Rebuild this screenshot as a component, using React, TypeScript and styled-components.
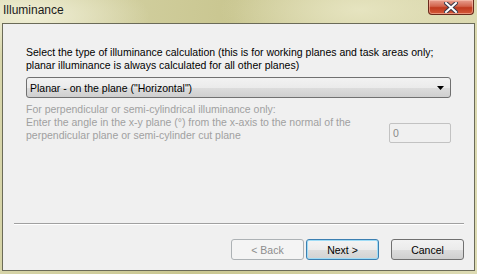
import React from 'react';
import styled, { createGlobalStyle, css } from 'styled-components';

const GlobalStyle = createGlobalStyle`
    html, body {
        margin: 0;
        padding: 0;
        background: #d6d4a8;
    }
    * {
        box-sizing: border-box;
    }
`

const Window = styled.div`
    width: 477px;
    height: 274px;
    display: flex;
    flex-direction: column;
    background:
        radial-gradient(ellipse 120px 40px at 30px 16px, #f0efd6 0%, rgba(240, 239, 214, 0) 100%),
        radial-gradient(ellipse 140px 50px at 360px 10px, #e6e4c0 0%, rgba(230, 228, 192, 0) 100%),
        linear-gradient(100deg, #d9d7ad 0%, #c9c690 45%, #d2cf9f 70%, #dddbb4 100%);
    font-family: "Liberation Sans", Arial, sans-serif;
    font-size: 10.5px;
    color: #000;
`

const TitleBar = styled.div`
    height: 23px;
    flex: 0 0 23px;
    display: flex;
    justify-content: space-between;
    align-items: flex-start;
    padding-left: 3px;
`

const Title = styled.div`
    font-size: 12px;
    line-height: 20px;
    color: #1a1a1a;
`

const CloseButton = styled.div`
    width: 46px;
    height: 15px;
    margin-right: 3px;
    border: 1px solid #6a2a1c;
    border-top: none;
    border-radius: 0 0 4px 4px;
    background: linear-gradient(to bottom, #e8a090 0%, #d2644c 45%, #c03a1e 55%, #d4593a 100%);
    box-shadow: inset 0 0 0 1px rgba(255, 210, 190, 0.5);
    display: flex;
    justify-content: center;
    align-items: center;
`

const Frame = styled.div`
    flex: 1;
    margin: 0 2px 3px 2px;
    border: 1px solid #6b6b58;
    background: #f0f0f0;
    display: flex;
    flex-direction: column;
`

const Content = styled.div`
    flex: 1;
    padding: 22px 23px 0 23px;
    display: flex;
    flex-direction: column;
`

const Label = styled.div<{ $disabled?: boolean }>`
    line-height: 13px;
    color: ${p => (p.$disabled ? '#a0a0a0' : '#000')};
    white-space: nowrap;
`

const Select = styled.div`
    margin-top: 5px;
    height: 21px;
    border: 1px solid #707070;
    border-radius: 3px;
    background: linear-gradient(to bottom, #f2f2f2 0%, #ebebeb 50%, #dddddd 51%, #cfcfcf 100%);
    display: flex;
    align-items: center;
    justify-content: space-between;
    padding: 0 6px 0 3px;
`

const AngleRow = styled.div`
    margin-top: 5px;
    display: flex;
    justify-content: space-between;
    align-items: flex-end;
`

const AngleInput = styled.div`
    width: 62px;
    height: 20px;
    margin-bottom: -1px;
    border: 1px solid #c2c2c2;
    border-radius: 2px;
    background: #f0f0f0;
    color: #8a8a8a;
    line-height: 18px;
    padding-left: 3px;
`

const Footer = styled.div`
    padding: 0 10px 10px 11px;
`

const Separator = styled.div`
    height: 2px;
    border-top: 1px solid #a0a0a0;
    border-bottom: 1px solid #ffffff;
`

const ButtonRow = styled.div`
    margin-top: 14px;
    display: flex;
    justify-content: flex-end;
`

const Button = styled.div<{ $variant?: 'disabled' | 'default' }>`
    width: 73px;
    height: 21px;
    margin-left: 2px;
    border: 1px solid #707070;
    border-radius: 3px;
    background: linear-gradient(to bottom, #f2f2f2 0%, #ebebeb 50%, #dddddd 51%, #cfcfcf 100%);
    display: flex;
    align-items: center;
    justify-content: center;
    color: #000;

    ${p => p.$variant === 'disabled' && css`
        border-color: #adb2b5;
        background: #f4f4f4;
        color: #8d8d8d;
    `}

    ${p => p.$variant === 'default' && css`
        border-color: #3c7fb1;
        box-shadow: inset 0 0 0 1px #9fdcf6;
        background: linear-gradient(to bottom, #f4f4f4 0%, #ececec 50%, #dedede 51%, #d2d2d2 100%);
    `}

    &:last-child {
        margin-left: 12px;
    }
`

const CloseIcon = () => (
    <svg width="14" height="11" viewBox="0 0 14 11">
        <path d="M2 1 L12 10 M12 1 L2 10" stroke="#3a3a4a" strokeWidth="4" strokeLinecap="square" />
        <path d="M2 1 L12 10 M12 1 L2 10" stroke="#ffffff" strokeWidth="2" strokeLinecap="square" />
    </svg>
)

const ArrowIcon = () => (
    <svg width="7" height="4" viewBox="0 0 7 4">
        <path d="M0 0 H7 L3.5 4 Z" fill="#000" />
    </svg>
)

export default function App() {
    return (
        <>
            <GlobalStyle />
            <Window>
                <TitleBar>
                    <Title>Illuminance</Title>
                    <CloseButton>
                        <CloseIcon />
                    </CloseButton>
                </TitleBar>
                <Frame>
                    <Content>
                        <Label>Select the type of illuminance calculation (this is for working planes and task areas only;</Label>
                        <Label>planar illuminance is always calculated for all other planes)</Label>
                        <Select>
                            <span>Planar - on the plane ("Horizontal")</span>
                            <ArrowIcon />
                        </Select>
                        <AngleRow>
                            <div>
                                <Label $disabled>For perpendicular or semi-cylindrical illuminance only:</Label>
                                <Label $disabled>Enter the angle in the x-y plane (°) from the x-axis to the normal of the</Label>
                                <Label $disabled>perpendicular plane or semi-cylinder cut plane</Label>
                            </div>
                            <AngleInput>0</AngleInput>
                        </AngleRow>
                    </Content>
                    <Footer>
                        <Separator />
                        <ButtonRow>
                            <Button $variant="disabled">&lt; Back</Button>
                            <Button $variant="default">Next &gt;</Button>
                            <Button>Cancel</Button>
                        </ButtonRow>
                    </Footer>
                </Frame>
            </Window>
        </>
    );
}
